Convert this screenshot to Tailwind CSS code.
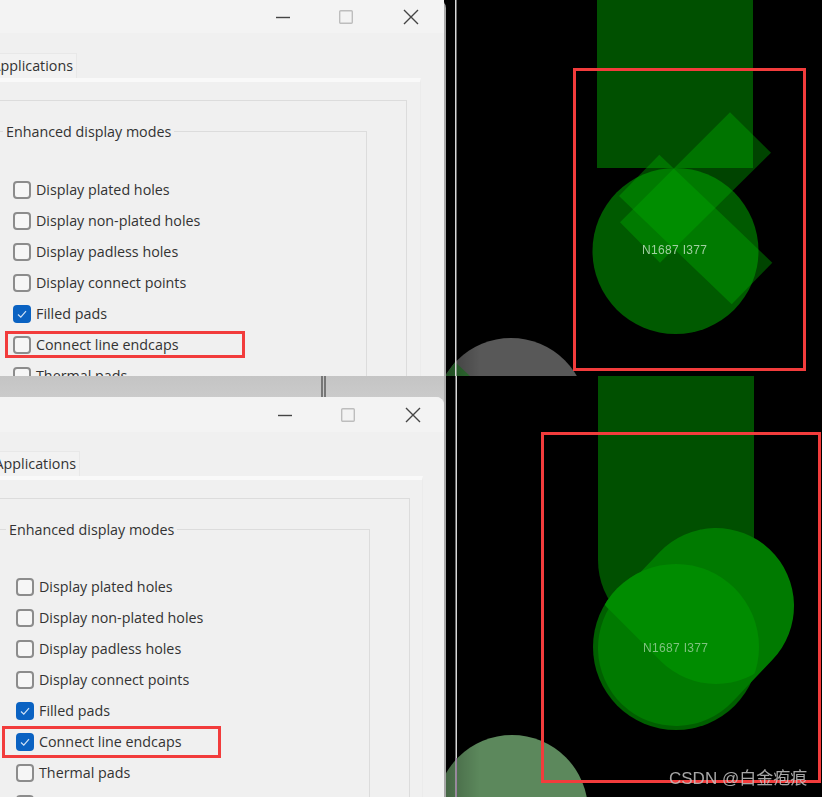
<!DOCTYPE html>
<html lang="en">
<head>
    <meta charset="UTF-8">
    <meta name="viewport" content="width=device-width, initial-scale=1.0">
    <title>Connect line endcaps</title>
    <script src="https://cdn.jsdelivr.net/npm/@tailwindcss/browser@4"></script>
</head>
<body class="bg-black">
    <div class="w-[822px] h-[797px] overflow-hidden blur-[0.4px] font-['Open_Sans','Liberation_Sans',sans-serif] text-[14.3px] text-[#333]">

        <!-- Top panel: endcaps off -->
        <div class="flex h-[376px] overflow-hidden">
            <div class="w-[446px] shrink-0 bg-[#f0f0f0] border-r-2 border-[#a8a8a8] rounded-tr-[8px]">
                <div class="h-[33px] bg-[#f3f3f3] flex items-center justify-end pr-[25px] pt-[1px]">
                    <svg class="w-[14px] h-[14px]" viewBox="0 0 14 14"><path d="M0 7.5h14" stroke="#444" stroke-width="1.4"/></svg>
                    <svg class="w-[14px] h-[14px] ml-[49px]" viewBox="0 0 14 14"><rect x=".7" y=".7" width="12.6" height="12.6" rx="1" fill="none" stroke="#bdbdbd" stroke-width="1.4"/></svg>
                    <svg class="w-[16px] h-[16px] ml-[50px]" viewBox="0 0 16 16"><path d="M1 1l14 14M15 1L1 15" stroke="#444" stroke-width="1.4"/></svg>
                </div>
                <div class="mt-[20px] w-[77px] h-[25px] bg-[#f2f2f2] border-r border-t border-[#e8e8e8] flex items-center justify-end pr-[3px] overflow-hidden whitespace-nowrap">Applications</div>
                <div class="w-[421px] h-[300px] border-t-[4px] border-t-[#f9f9f9] border-r border-r-[#ebebeb] pt-[18px]">
                    <div class="w-[407px] h-[280px] border-t border-r border-[#dcdcdc] pt-[19px]">
                        <fieldset class="w-[367px] h-[260px] border-t border-r border-[#dcdcdc]">
                            <legend class="ml-[3px] px-[3px] pt-[2px] leading-[20px]">Enhanced display modes</legend>
                            <div class="pl-[13px] pt-[32px]">
                                <div class="flex items-center gap-[5px] h-[31px]"><span class="w-[18px] h-[18px] rounded-[4px] border-2 border-[#8c8c8c] bg-[#f6f6f6]"></span>Display plated holes</div>
                                <div class="flex items-center gap-[5px] h-[31px]"><span class="w-[18px] h-[18px] rounded-[4px] border-2 border-[#8c8c8c] bg-[#f6f6f6]"></span>Display non-plated holes</div>
                                <div class="flex items-center gap-[5px] h-[31px]"><span class="w-[18px] h-[18px] rounded-[4px] border-2 border-[#8c8c8c] bg-[#f6f6f6]"></span>Display padless holes</div>
                                <div class="flex items-center gap-[5px] h-[31px]"><span class="w-[18px] h-[18px] rounded-[4px] border-2 border-[#8c8c8c] bg-[#f6f6f6]"></span>Display connect points</div>
                                <div class="flex items-center gap-[5px] h-[31px]"><span class="w-[18px] h-[18px] rounded-[4px] bg-[#0a62c2] flex items-center justify-center"><svg class="w-[12px] h-[12px]" viewBox="0 0 12 12"><path d="M2 6.5l2.8 2.6L10 3.2" fill="none" stroke="#cfe2f7" stroke-width="1.2"/></svg></span>Filled pads</div>
                                <div class="relative flex items-center gap-[5px] h-[31px]"><span class="w-[18px] h-[18px] rounded-[4px] border-2 border-[#8c8c8c] bg-[#f6f6f6]"></span>Connect line endcaps
                                    <div class="absolute left-[-8px] top-[2px] w-[240px] h-[27px] border-[3px] border-[#f23c3c]"></div>
                                </div>
                                <div class="flex items-center gap-[5px] h-[31px]"><span class="w-[18px] h-[18px] rounded-[4px] border-2 border-[#8c8c8c] bg-[#f6f6f6]"></span>Thermal pads</div>
                            </div>
                        </fieldset>
                    </div>
                </div>
            </div>
            <svg class="w-[376px] h-[376px] shrink-0" viewBox="446 0 376 376">
                <defs>
                    <linearGradient id="shade1" x1="0" x2="1" y1="0" y2="0"><stop offset="0" stop-color="#000" stop-opacity=".3"/><stop offset="1" stop-color="#000" stop-opacity="0"/></linearGradient>
                </defs>
                <circle cx="511" cy="414" r="76" fill="#585858"/>
                <path d="M445 376L455 362L470 376Z" fill="#2f6e32"/>
                <rect x="446" y="330" width="34" height="46" fill="url(#shade1)"/>
                <rect x="455" y="0" width="1.5" height="376" fill="#d8d8d8"/>
                <rect x="597" y="0" width="156" height="168" fill="#005000"/>
                <circle cx="675.5" cy="251" r="83" fill="#005a00"/>
                <path d="M730 112.3L771 152.7L660 262.7L620 222.3Z" fill="#00aa00" fill-opacity=".4"/>
                <path d="M659.3 154.7L619 196L731.7 304.3L772.3 262.7Z" fill="#00aa00" fill-opacity=".4"/>
                <text x="674.5" y="254" text-anchor="middle" font-family="Liberation Sans" font-size="12" textLength="65" fill="#a0cfa0">N1687 I377</text>
                <rect x="574.5" y="69.5" width="230" height="300" fill="none" stroke="#f23c3c" stroke-width="3"/>
            </svg>
        </div>

        <!-- Bottom panel: endcaps on -->
        <div class="flex h-[421px] overflow-hidden">
            <div class="w-[446px] shrink-0 border-r-2 border-[#a8a8a8] bg-gradient-to-b from-[#c4c4c4] via-[#ececec] via-30% to-[#ececec]">
                <div class="h-[21px] flex pl-[321px]"><div class="w-[5px] border-x-2 border-[#777]"></div></div>
                <div class="bg-[#f0f0f0] rounded-tr-[8px] h-[400px]">
                    <div class="h-[35px] bg-[#f3f3f3] rounded-tr-[8px] flex items-center justify-end pr-[23px] pt-[1px]">
                        <svg class="w-[14px] h-[14px]" viewBox="0 0 14 14"><path d="M0 7.5h14" stroke="#444" stroke-width="1.4"/></svg>
                        <svg class="w-[14px] h-[14px] ml-[49px]" viewBox="0 0 14 14"><rect x=".7" y=".7" width="12.6" height="12.6" rx="1" fill="none" stroke="#bdbdbd" stroke-width="1.4"/></svg>
                        <svg class="w-[16px] h-[16px] ml-[50px]" viewBox="0 0 16 16"><path d="M1 1l14 14M15 1L1 15" stroke="#444" stroke-width="1.4"/></svg>
                    </div>
                    <div class="mt-[19px] w-[80px] h-[25px] bg-[#f2f2f2] border-r border-t border-[#e8e8e8] flex items-center justify-end pr-[3px] overflow-hidden whitespace-nowrap">Applications</div>
                    <div class="w-[423px] h-[321px] border-t-[4px] border-t-[#f9f9f9] border-r border-r-[#ebebeb] pt-[18px]">
                        <div class="w-[410px] h-[299px] border-t border-r border-[#dcdcdc] pt-[19px]">
                            <fieldset class="w-[370px] h-[280px] border-t border-r border-[#dcdcdc]">
                                <legend class="ml-[6px] px-[3px] pt-[2px] leading-[20px]">Enhanced display modes</legend>
                                <div class="pl-[16px] pt-[31px]">
                                    <div class="flex items-center gap-[5px] h-[31px]"><span class="w-[18px] h-[18px] rounded-[4px] border-2 border-[#8c8c8c] bg-[#f6f6f6]"></span>Display plated holes</div>
                                    <div class="flex items-center gap-[5px] h-[31px]"><span class="w-[18px] h-[18px] rounded-[4px] border-2 border-[#8c8c8c] bg-[#f6f6f6]"></span>Display non-plated holes</div>
                                    <div class="flex items-center gap-[5px] h-[31px]"><span class="w-[18px] h-[18px] rounded-[4px] border-2 border-[#8c8c8c] bg-[#f6f6f6]"></span>Display padless holes</div>
                                    <div class="flex items-center gap-[5px] h-[31px]"><span class="w-[18px] h-[18px] rounded-[4px] border-2 border-[#8c8c8c] bg-[#f6f6f6]"></span>Display connect points</div>
                                    <div class="flex items-center gap-[5px] h-[31px]"><span class="w-[18px] h-[18px] rounded-[4px] bg-[#0a62c2] flex items-center justify-center"><svg class="w-[12px] h-[12px]" viewBox="0 0 12 12"><path d="M2 6.5l2.8 2.6L10 3.2" fill="none" stroke="#cfe2f7" stroke-width="1.2"/></svg></span>Filled pads</div>
                                    <div class="relative flex items-center gap-[5px] h-[31px]"><span class="w-[18px] h-[18px] rounded-[4px] bg-[#0a62c2] flex items-center justify-center"><svg class="w-[12px] h-[12px]" viewBox="0 0 12 12"><path d="M2 6.5l2.8 2.6L10 3.2" fill="none" stroke="#cfe2f7" stroke-width="1.2"/></svg></span>Connect line endcaps
                                        <div class="absolute left-[-14px] top-[0px] w-[219px] h-[32px] border-[3px] border-[#f23c3c]"></div>
                                    </div>
                                    <div class="flex items-center gap-[5px] h-[31px]"><span class="w-[18px] h-[18px] rounded-[4px] border-2 border-[#8c8c8c] bg-[#f6f6f6]"></span>Thermal pads</div>
                                    <div class="flex items-center gap-[5px] h-[31px]"><span class="w-[18px] h-[18px] rounded-[4px] border-2 border-[#8c8c8c] bg-[#f6f6f6]"></span>Bus rats</div>
                                </div>
                            </fieldset>
                        </div>
                    </div>
                </div>
            </div>
            <svg class="w-[376px] h-[421px] shrink-0" viewBox="446 376 376 421">
                <defs>
                    <linearGradient id="shade2" x1="0" x2="1" y1="0" y2="0"><stop offset="0" stop-color="#000" stop-opacity=".25"/><stop offset="1" stop-color="#000" stop-opacity="0"/></linearGradient>
                    <clipPath id="baseCircle"><circle cx="676" cy="647" r="83"/></clipPath>
                </defs>
                <circle cx="512" cy="811" r="76" fill="#5c885c"/>
                <rect x="446" y="730" width="34" height="67" fill="url(#shade2)"/>
                <rect x="455.5" y="376" width="1.5" height="421" fill="#d8d8d8"/>
                <rect x="455.5" y="758" width="1.5" height="39" fill="#9a7fa0"/>
                <path d="M598 376H754V560A78 78 0 0 1 598 560Z" fill="#005000"/>
                <circle cx="676" cy="647" r="83" fill="#005f00"/>
                <line x1="716" y1="606" x2="676" y2="648" stroke="#007a00" stroke-width="156" stroke-linecap="round"/>
                <line x1="716" y1="606" x2="662" y2="552" stroke="#008c00" stroke-width="156" stroke-linecap="round" clip-path="url(#baseCircle)"/>
                <text x="675.5" y="652" text-anchor="middle" font-family="Liberation Sans" font-size="12" textLength="65" fill="#7fc27f">N1687 I377</text>
                <rect x="542.5" y="433.5" width="277" height="348" fill="none" stroke="#f23c3c" stroke-width="3"/>
                <text x="669" y="784" font-family="Liberation Sans, Noto Sans CJK SC, sans-serif" font-size="17" fill="#c4c4c4" fill-opacity=".85">CSDN @白金疱痕</text>
            </svg>
        </div>
    </div>
</body>
</html>
